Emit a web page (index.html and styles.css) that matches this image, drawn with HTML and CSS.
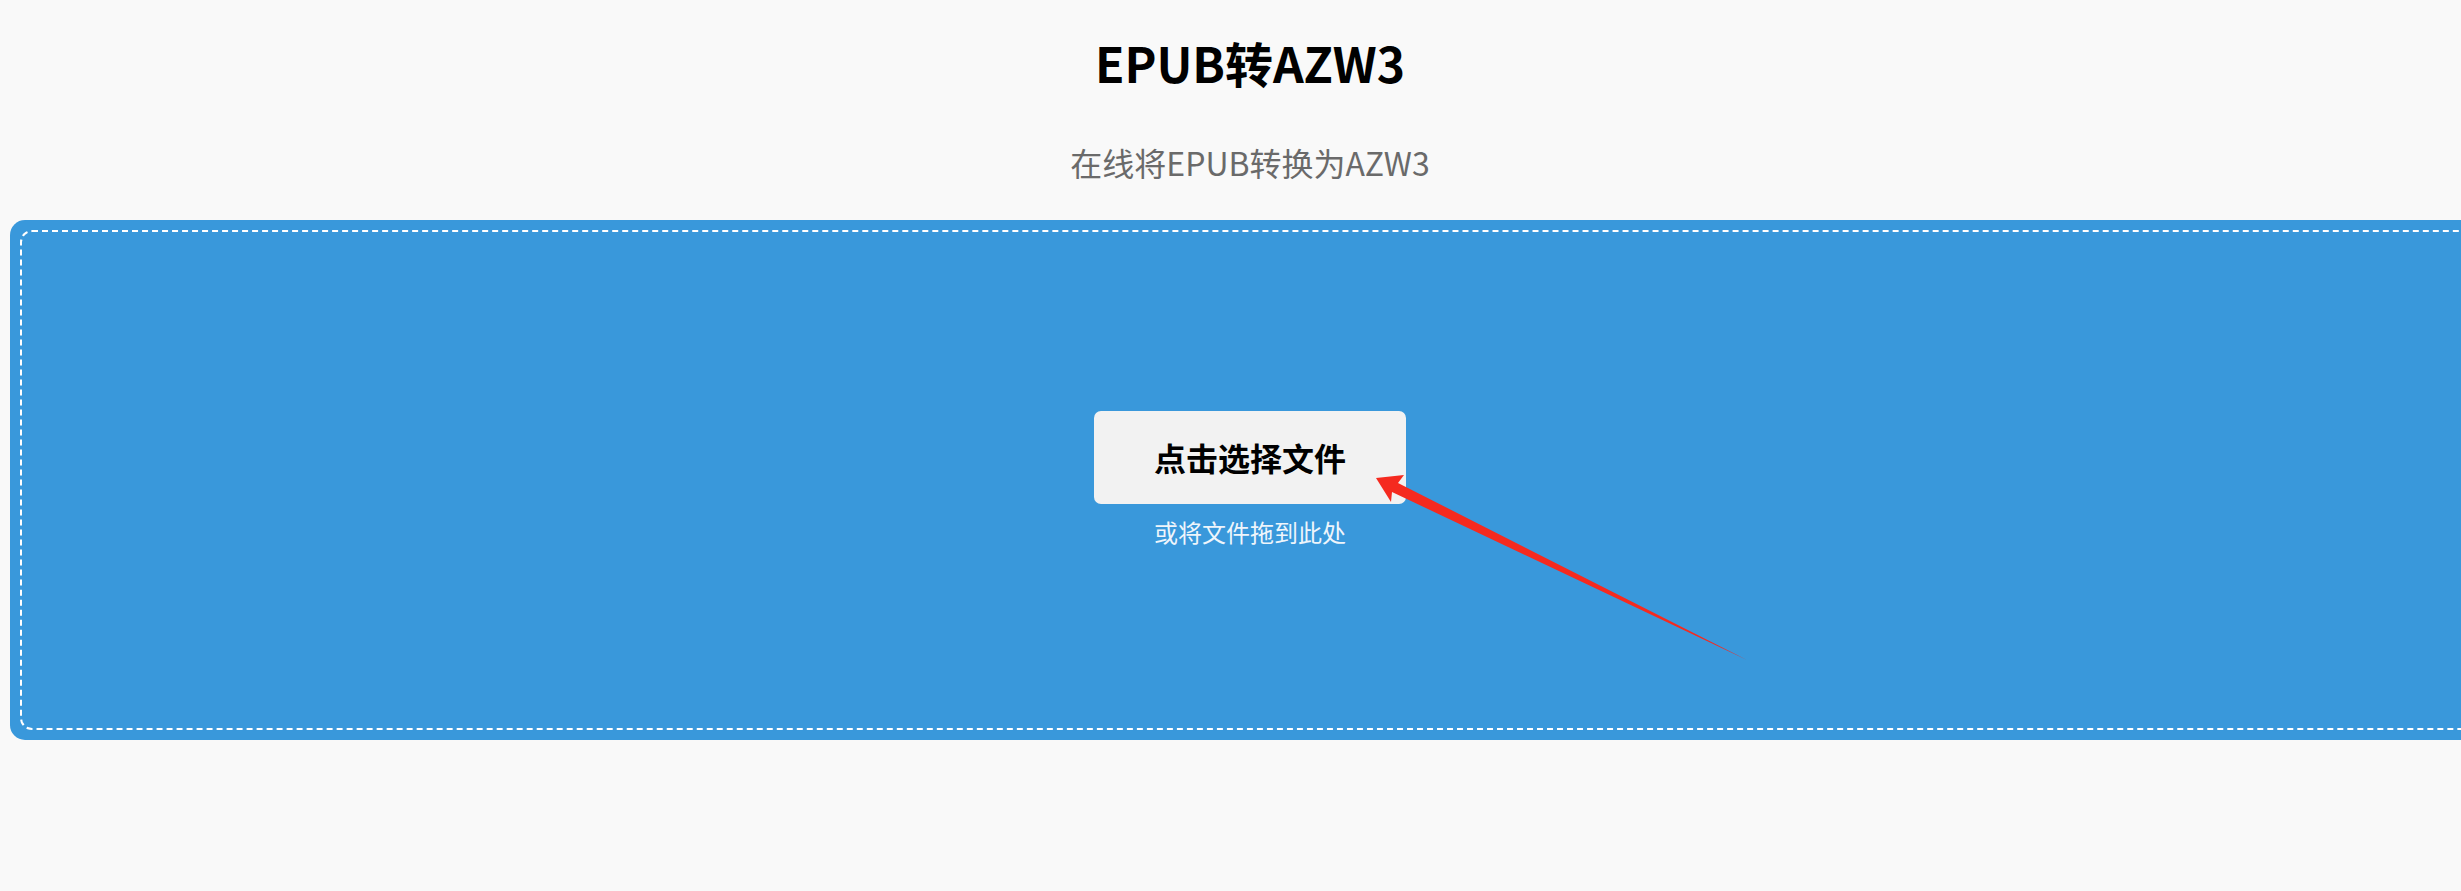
FILE: index.html
```html
<!DOCTYPE html>
<html lang="zh-CN">
<head>
<meta charset="utf-8">
<title>EPUB转AZW3</title>
<link rel="stylesheet" href="styles.css">
</head>
<body>
<div class="page">
  <h1 class="title">EPUB转AZW3</h1>
  <p class="subtitle">在线将EPUB转换为AZW3</p>
  <div class="dropzone">
    <div class="dropzone-inner">
      <button class="pick-btn" type="button">点击选择文件</button>
      <div class="hint">或将文件拖到此处</div>
    </div>
  </div>
</div>
<svg class="annotation" width="2461" height="891" viewBox="0 0 2461 891" xmlns="http://www.w3.org/2000/svg">
  <polygon points="1376,478 1404,475 1398,483 1747,660 1392,492 1391,502" fill="#f52a1f"/>
</svg>
</body>
</html>
```

FILE: styles.css
```css
html, body {
  margin: 0;
  padding: 0;
  overflow: hidden;
}
body {
  background: #f9f9f9;
  font-family: "Noto Sans CJK SC", "Noto Sans", sans-serif;
  position: relative;
  height: 891px;
}
.page {
  width: 2480px;
  margin-left: 10px;
  display: flex;
  flex-direction: column;
  align-items: center;
}
.title {
  margin: 33px 0 0;
  font-size: 48px;
  line-height: 58px;
  font-weight: 700;
  color: #000;
}
.subtitle {
  margin: 51px 0 0;
  font-size: 32px;
  line-height: 40px;
  color: #6a6a6a;
}
.dropzone {
  align-self: stretch;
  margin-top: 38px;
  background: #3998db;
  border-radius: 15px;
  padding: 10px;
  height: 500px;
}
.dropzone-inner {
  box-sizing: border-box;
  height: 100%;
  border: 2px dashed #ffffff;
  border-radius: 12px;
  display: flex;
  flex-direction: column;
  align-items: center;
  justify-content: center;
}
.pick-btn {
  box-sizing: border-box;
  width: 312px;
  height: 93px;
  border: none;
  border-radius: 7px;
  background: #f2f2f2;
  color: #000;
  font-family: "Noto Sans CJK SC", "Noto Sans", sans-serif;
  font-size: 32px;
  font-weight: 700;
  padding: 0;
  margin-top: -2px;
}
.hint {
  margin-top: 12px;
  font-size: 24px;
  line-height: 32px;
  color: #eef5fb;
}
.annotation {
  position: absolute;
  left: 0;
  top: 0;
  pointer-events: none;
}
```
